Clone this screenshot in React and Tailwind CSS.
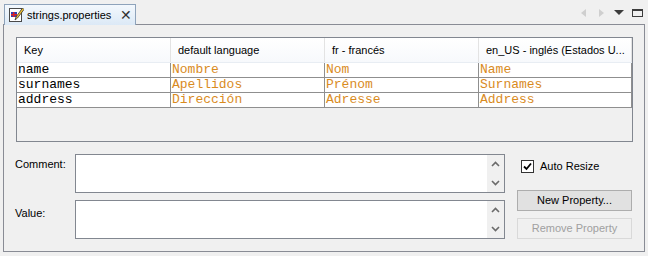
import React from "react";

const rows = [
    ["name", "Nombre", "Nom", "Name"],
    ["surnames", "Apellidos", "Prénom", "Surnames"],
    ["address", "Dirección", "Adresse", "Address"],
];

const headers = ["Key", "default language", "fr - francés", "en_US - inglés (Estados U..."];
const colWidths = ["w-[154px]", "w-[154px]", "w-[154px]", "w-[153px]"];

const TabIcon = () => (
    <svg width="16" height="16" viewBox="0 0 16 16">
        <rect x="1.5" y="1.5" width="12" height="13" fill="#fff" stroke="#4a4a4a" />
        <rect x="3" y="5" width="6" height="5" fill="#2b3fb8" />
        <rect x="3" y="7" width="6" height="1.5" fill="#d22" />
        <rect x="5" y="5" width="1.5" height="5" fill="#d22" />
        <path d="M14.5 1 L8 10 L7 13 L9.5 11 L16 2.5 Z" fill="#f2c12e" stroke="#333" strokeWidth="0.8" />
    </svg>
);

const Chevron = ({ up }) => (
    <svg width="9" height="6" viewBox="0 0 9 6">
        <polyline
            points={up ? "1,5 4.5,1.5 8,5" : "1,1 4.5,4.5 8,1"}
            fill="none"
            stroke="#6a6a6a"
            strokeWidth="1.6"
        />
    </svg>
);

const TextBox = () => (
    <div className="flex h-[39px] border border-[#828790] bg-white">
        <div className="flex-1" />
        <div className="w-[17px] bg-[#f0f0f0] flex flex-col items-center justify-between py-[6px]">
            <Chevron up />
            <Chevron />
        </div>
    </div>
);

const App = () => {
    return (
        <div className="w-[648px] h-[256px] bg-[#f0f0f0] pt-[4px] px-[3px] font-['Liberation_Sans',Arial,sans-serif] text-[11px] text-black">

            {/* tab strip */}
            <div className="flex h-[21px]">
                <div className="w-[1px] border-b border-[#898c95]" />
                <div className="w-[132px] h-[21px] flex items-center border border-b-0 border-[#8ea3bb] bg-gradient-to-b from-[#f3f8fd] to-[#dce9f6] pl-[3px]">
                    <TabIcon />
                    <span className="ml-[3px] leading-[13px]">strings.properties</span>
                    <span className="ml-auto mr-[3px] text-[14px] leading-[14px] text-[#333]">✕</span>
                </div>
                <div className="flex-1 border-b border-[#898c95] flex justify-end items-start pt-[5px] pr-[2px]">
                    <svg width="62" height="9" viewBox="0 0 62 9">
                        <polygon points="5,0 0,4 5,8" fill="#cfcfcf" />
                        <polygon points="18,0 23,4 18,8" fill="#cfcfcf" />
                        <polygon points="33,1 43,1 38,6" fill="#3c3c3c" />
                        <rect x="51.5" y="0.5" width="10" height="7" fill="none" stroke="#3c3c3c" />
                        <rect x="51" y="0" width="11" height="2" fill="#3c3c3c" />
                    </svg>
                </div>
            </div>

            {/* panel */}
            <div className="h-[227px] border-x border-b border-[#898c95] pt-[12px] pl-[11px]">

                {/* table */}
                <div className="ml-[1px] w-[617px] h-[105px] border border-[#828790] bg-[#f0f0f0]">
                    <div className="flex h-[25px] bg-gradient-to-b from-white to-[#f7f9fc] border-b border-[#e8edf3]">
                        {headers.map((h, i) => (
                            <div
                                key={i}
                                className={`${colWidths[i]} flex items-center pl-[7px] border-r border-[#e3e3e3] whitespace-nowrap overflow-hidden`}
                            >
                                {h}
                            </div>
                        ))}
                    </div>
                    {rows.map((r, ri) => (
                        <div key={ri} className="flex h-[15px] bg-white border-b border-[#8f8f8f] font-['Liberation_Mono','Courier_New',monospace] text-[13px] leading-[14px]">
                            {r.map((c, ci) => (
                                <div
                                    key={ci}
                                    className={`${colWidths[ci]} pl-[1px] border-r border-[#8f8f8f] ${ci === 0 ? "text-black" : "text-[#d98b1e]"}`}
                                >
                                    {c}
                                </div>
                            ))}
                        </div>
                    ))}
                </div>

                {/* editor area */}
                <div className="flex mt-[12px]">
                    <div className="w-[60px] flex flex-col">
                        <div className="h-[39px] pt-[2px]">Comment:</div>
                        <div className="h-[39px] mt-[7px] pt-[5px]">Value:</div>
                    </div>
                    <div className="w-[430px] flex flex-col gap-[7px]">
                        <TextBox />
                        <TextBox />
                    </div>
                    <div className="w-[115px] ml-[12px] flex flex-col">
                        <div className="flex items-center mt-[6px] ml-[4px] h-[13px]">
                            <div className="w-[13px] h-[13px] border border-[#333] bg-white flex items-center justify-center">
                                <svg width="9" height="9" viewBox="0 0 9 9">
                                    <polyline points="1,4.5 3.5,7 8,1.5" fill="none" stroke="#000" strokeWidth="1.8" />
                                </svg>
                            </div>
                            <span className="ml-[6px]">Auto Resize</span>
                        </div>
                        <button className="mt-[17px] h-[21px] w-[115px] border border-[#adadad] bg-[#e1e1e1] text-[11px]">
                            New Property...
                        </button>
                        <button disabled className="mt-[7px] h-[21px] w-[115px] border border-[#d9d9d9] bg-[#f0f0f0] text-[#a0a0a0] text-[11px]">
                            Remove Property
                        </button>
                    </div>
                </div>

            </div>
        </div>
    );
};

export default App;
